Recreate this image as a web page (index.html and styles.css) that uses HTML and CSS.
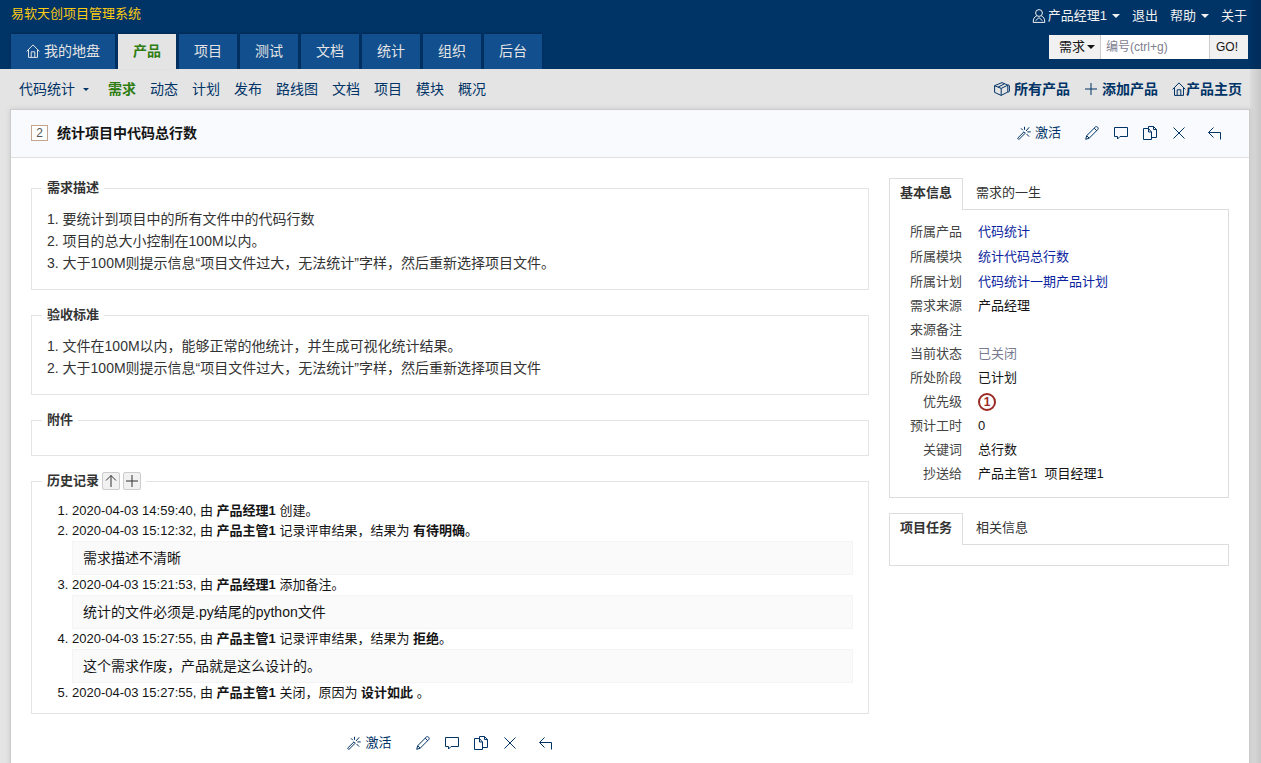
FILE: index.html
```html
<!DOCTYPE html>
<html lang="zh-CN">
<head>
  <meta charset="UTF-8" />
  <meta name="viewport" content="width=device-width, initial-scale=1.0" />
  <title>统计项目中代码总行数</title>
  <link rel="stylesheet" href="styles.css">
</head>
<body>
  <svg class="sprite" aria-hidden="true">
    <symbol id="i-home" viewBox="0 0 14 14"><path d="M.6 7.4 7 .9l6.4 6.5M2.5 6v7.4h9V6M5.2 13.4V7.8h3.6v5.6"/></symbol>
    <symbol id="i-user" viewBox="0 0 14 14"><circle cx="7" cy="4" r="3.400"/><path d="M4.800 6.800C2.300 8 1.200 9.600 1.200 13.400h11.600c0-3.800-1.100-5.400-3.600-6.600M3.500 11.800 7 8.600l3.500 3.200"/></symbol>
    <symbol id="i-cube" viewBox="0 0 16 14"><path d="M.6 3.700 8 .6l5.800 2.600-6.600 3.200zM.6 3.700v6.700l6.600 3V6.400M7.200 13.400l6.600-3.400V3.200M4 5.200l6.400-3.400M13.800 2.600l1.600 1v5.800l-1.600 1"/></symbol>
    <symbol id="i-plus" viewBox="0 0 14 14"><path d="M7 1v12M1 7h12"/></symbol>
    <symbol id="i-up" viewBox="0 0 14 14"><path d="M7 13V1.500M2 6.500l5-5 5 5"/></symbol>
    <symbol id="i-wand" viewBox="0 0 14 14"><path d="M.6 12.200 7 5.800l1.300 1.300-6.400 6.400zM7.500.8v3M4 2.300l1.800 1.900M9 5l3.200-3.700M10.300 5.900h3.400M9.600 8l2.500 2.600"/></symbol>
    <symbol id="i-pencil" viewBox="0 0 14 14"><path d="M.7 13.300l1-3.600L10.400 1c1.400-1.200 3.600.9 2.500 2.400L4.200 12.200zM9.200 2.200l2.600 2.600M1.700 9.700l2.500 2.500"/></symbol>
    <symbol id="i-comment" viewBox="0 0 14 14"><path d="M.5 1.500h13v9H6L3.500 13v-2.500h-3z"/></symbol>
    <symbol id="i-copy" viewBox="0 0 14 14"><path d="M.5 2.500h5l3 3.500v7.500h-8zM5.500 2.500V6h3M5.500 2.500v-2h5l3 3v8h-5M10.500.5v3h3"/></symbol>
    <symbol id="i-close" viewBox="0 0 14 14"><path d="M1.500 1.500l11 11M12.500 1.500l-11 11"/></symbol>
    <symbol id="i-back" viewBox="0 0 14 14"><path d="M5.500 1.500l-5 5 5 5M.5 6.500h12v7"/></symbol>
  </svg>

  <header class="header">
    <div class="topbar">
      <h1 class="company">易软天创项目管理系统</h1>
      <nav class="topnav">
        <a href="#"><svg class="icon"><use href="#i-user"/></svg> 产品经理1<span class="caret"></span></a>
        <a href="#">退出</a>
        <a href="#">帮助<span class="caret"></span></a>
        <a href="#">关于</a>
      </nav>
    </div>
    <div class="mainbar">
      <nav class="mainmenu">
        <a href="#"><svg class="icon"><use href="#i-home"/></svg>我的地盘</a>
        <a href="#" class="active">产品</a>
        <a href="#">项目</a>
        <a href="#">测试</a>
        <a href="#">文档</a>
        <a href="#">统计</a>
        <a href="#">组织</a>
        <a href="#">后台</a>
      </nav>
      <form class="search">
        <label class="search-type">
          <select aria-label="类型"><option>需求</option></select>
          <span class="caret"></span>
        </label>
        <input type="text" placeholder="编号(ctrl+g)" aria-label="编号">
        <button type="button">GO!</button>
      </form>
    </div>
  </header>

  <div class="modulemenu">
    <nav class="modules">
      <a href="#" class="product">代码统计<span class="caret small"></span></a>
      <a href="#" class="active">需求</a>
      <a href="#">动态</a>
      <a href="#">计划</a>
      <a href="#">发布</a>
      <a href="#">路线图</a>
      <a href="#">文档</a>
      <a href="#">项目</a>
      <a href="#">模块</a>
      <a href="#">概况</a>
    </nav>
    <nav class="shortcuts">
      <a href="#"><svg class="icon wide"><use href="#i-cube"/></svg>所有产品</a>
      <a href="#"><svg class="icon"><use href="#i-plus"/></svg>添加产品</a>
      <a href="#" class="tight"><svg class="icon"><use href="#i-home"/></svg>产品主页</a>
    </nav>
  </div>

  <main class="panel">
    <div class="titlebar">
      <h2><span class="story-id">2</span>统计项目中代码总行数</h2>
      <div class="actions">
        <a href="#" class="activate"><svg class="icon"><use href="#i-wand"/></svg>激活</a>
        <a href="#" aria-label="编辑"><svg class="icon"><use href="#i-pencil"/></svg></a>
        <a href="#" aria-label="备注"><svg class="icon"><use href="#i-comment"/></svg></a>
        <a href="#" aria-label="复制"><svg class="icon"><use href="#i-copy"/></svg></a>
        <a href="#" aria-label="删除"><svg class="icon"><use href="#i-close"/></svg></a>
        <a href="#" class="back" aria-label="返回"><svg class="icon"><use href="#i-back"/></svg></a>
      </div>
    </div>

    <div class="row">
      <div class="col-main">
        <fieldset>
          <legend>需求描述</legend>
          <div class="article">
            <p>1. 要统计到项目中的所有文件中的代码行数</p>
            <p>2. 项目的总大小控制在100M以内。</p>
            <p>3. 大于100M则提示信息“项目文件过大，无法统计”字样，然后重新选择项目文件。</p>
          </div>
        </fieldset>
        <fieldset>
          <legend>验收标准</legend>
          <div class="article">
            <p>1. 文件在100M以内，能够正常的他统计，并生成可视化统计结果。</p>
            <p>2. 大于100M则提示信息“项目文件过大，无法统计”字样，然后重新选择项目文件</p>
          </div>
        </fieldset>
        <fieldset>
          <legend>附件</legend>
        </fieldset>
        <fieldset class="history">
          <legend>历史记录
            <button type="button" aria-label="倒序"><svg class="icon"><use href="#i-up"/></svg></button>
            <button type="button" aria-label="展开"><svg class="icon"><use href="#i-plus"/></svg></button>
          </legend>
          <ol>
            <li>2020-04-03 14:59:40, 由 <strong>产品经理1</strong> 创建。</li>
            <li>2020-04-03 15:12:32, 由 <strong>产品主管1</strong> 记录评审结果，结果为 <strong>有待明确</strong>。
              <div class="comment">需求描述不清晰</div>
            </li>
            <li>2020-04-03 15:21:53, 由 <strong>产品经理1</strong> 添加备注。
              <div class="comment">统计的文件必须是.py结尾的python文件</div>
            </li>
            <li>2020-04-03 15:27:55, 由 <strong>产品主管1</strong> 记录评审结果，结果为 <strong>拒绝</strong>。
              <div class="comment">这个需求作废，产品就是这么设计的。</div>
            </li>
            <li>2020-04-03 15:27:55, 由 <strong>产品主管1</strong> 关闭，原因为 <strong>设计如此</strong> 。</li>
          </ol>
        </fieldset>
        <div class="actions bottom">
          <a href="#" class="activate"><svg class="icon"><use href="#i-wand"/></svg>激活</a>
          <a href="#" aria-label="编辑"><svg class="icon"><use href="#i-pencil"/></svg></a>
          <a href="#" aria-label="备注"><svg class="icon"><use href="#i-comment"/></svg></a>
          <a href="#" aria-label="复制"><svg class="icon"><use href="#i-copy"/></svg></a>
          <a href="#" aria-label="删除"><svg class="icon"><use href="#i-close"/></svg></a>
          <a href="#" class="back" aria-label="返回"><svg class="icon"><use href="#i-back"/></svg></a>
        </div>
      </div>

      <div class="col-side">
        <section class="tabs">
          <div class="tab-heads">
            <a href="#" class="active">基本信息</a>
            <a href="#">需求的一生</a>
          </div>
          <div class="tab-content">
            <table>
              <tr class="linked"><th>所属产品</th><td><a href="#">代码统计</a></td></tr>
              <tr class="linked"><th>所属模块</th><td><a href="#">统计代码总行数</a></td></tr>
              <tr class="linked"><th>所属计划</th><td><a href="#">代码统计一期产品计划</a></td></tr>
              <tr><th>需求来源</th><td>产品经理</td></tr>
              <tr><th>来源备注</th><td></td></tr>
              <tr><th>当前状态</th><td class="closed">已关闭</td></tr>
              <tr><th>所处阶段</th><td>已计划</td></tr>
              <tr><th>优先级</th><td><span class="pri">1</span></td></tr>
              <tr><th>预计工时</th><td>0</td></tr>
              <tr><th>关键词</th><td>总行数</td></tr>
              <tr><th>抄送给</th><td>产品主管1 &nbsp;项目经理1</td></tr>
            </table>
          </div>
        </section>
        <section class="tabs">
          <div class="tab-heads">
            <a href="#" class="active">项目任务</a>
            <a href="#">相关信息</a>
          </div>
          <div class="tab-content empty"></div>
        </section>
      </div>
    </div>
  </main>
  <div class="edge"></div>
</body>
</html>
```

FILE: styles.css
```css
* {
  box-sizing: border-box;
}
body {
  margin: 0;
  min-height: 100vh;
  display: flex;
  flex-direction: column;
  font-family: "Liberation Sans", "Noto Sans CJK SC", sans-serif;
  font-size: 13px;
  line-height: 20px;
  color: #141414;
  background: #e4e4e4;
}
a {
  color: #036;
  text-decoration: none;
}
h1, h2, p {
  margin: 0;
}
input, button, select {
  font: inherit;
  color: inherit;
}
.sprite {
  display: none;
}
.icon {
  width: 14px;
  height: 14px;
  flex: none;
  fill: none;
  stroke: currentColor;
  stroke-width: 1;
}
.icon.wide {
  width: 16px;
}
.caret {
  display: inline-block;
  border: 4px solid transparent;
  border-top-color: currentColor;
  border-bottom: 0;
}
.caret.small {
  border-width: 3px;
  border-bottom: 0;
}

/* header */
.header {
  padding: 4px 13px 0 11px;
  background: #036;
  color: #fff;
}
.topbar, .mainbar {
  display: flex;
  justify-content: space-between;
}
.topbar {
  height: 30px;
}
.company {
  font-size: 13px;
  font-weight: normal;
  color: #fc1;
}
.topnav {
  display: flex;
  gap: 12px;
  padding: 2px 1px 0 0;
}
.topnav a {
  display: flex;
  align-items: center;
  height: 20px;
  color: #f1f1f1;
}
.topnav .icon {
  margin-right: 2px;
}
.topnav .caret {
  margin-left: 5px;
}
.mainmenu {
  display: flex;
  gap: 3px;
}
.mainmenu a {
  display: flex;
  align-items: center;
  gap: 4px;
  height: 35px;
  padding: 0 15px 2px;
  font-size: 14px;
  color: #e4e4e4;
  background: #114f8e;
  box-shadow: 0 -1px 2px rgba(0,0,0,0.2);
}
.mainmenu .active {
  font-weight: bold;
  color: #2f7d12;
  background: #e4e4e4;
}
.search {
  display: flex;
  height: 24px;
  margin-top: 1px;
  color: #141414;
}
.search-type {
  position: relative;
  width: 52px;
  border-right: 1px solid #ccc;
  background: #f1f1f1;
}
.search-type select {
  appearance: none;
  width: 100%;
  height: 24px;
  padding: 0 10px;
  border: 0;
  background: transparent;
}
.search-type .caret {
  position: absolute;
  right: 5px;
  top: 10px;
}
.search input {
  width: 108px;
  padding: 0 5px;
  border: 0;
  font-size: 12px;
  background: #fff;
}
.search input::placeholder {
  color: #808090;
}
.search button {
  width: 39px;
  padding: 0 4px 0 0;
  border: 0;
  border-left: 1px solid #ccc;
  font-size: 12px;
  background: #f1f1f1;
}

/* module menu */
.modulemenu {
  display: flex;
  justify-content: space-between;
  align-items: center;
  height: 40px;
  padding: 0 19px;
  font-size: 14px;
}
.modules, .shortcuts {
  display: flex;
  gap: 14px;
}
.modules a, .shortcuts a {
  display: flex;
  align-items: center;
}
.modules .product {
  margin-right: 5px;
}
.modules .caret {
  margin-left: 8px;
}
.modules .active {
  font-weight: bold;
  color: #2f7d12;
}
.shortcuts a {
  gap: 4px;
  font-weight: bold;
}
.shortcuts .tight {
  gap: 0;
}

/* content panel */
.panel {
  flex: 1;
  margin: 0 11px 0 10px;
  border: 1px solid #ccc;
  border-bottom: 0;
  background: #fff;
  box-shadow: 0 0 5px rgba(0,0,0,0.12);
}
.titlebar {
  display: flex;
  justify-content: space-between;
  align-items: center;
  height: 48px;
  padding: 0 27px 2px 20px;
  border-bottom: 1px solid #e0e0e0;
  background: #f8fafe;
}
.titlebar h2 {
  display: flex;
  align-items: center;
  gap: 9px;
  font-size: 14px;
}
.story-id {
  width: 17px;
  height: 16px;
  border: 1px solid #c4a48c;
  font-size: 12px;
  font-weight: normal;
  line-height: 15px;
  text-align: center;
  color: #555;
  background: #fff;
}
.actions {
  display: flex;
  align-items: center;
  gap: 15px;
}
.actions a {
  display: flex;
  align-items: center;
}
.actions .activate {
  gap: 4px;
  margin-right: 9px;
}
.actions .back {
  margin-left: 7px;
}
.actions.bottom {
  justify-content: center;
  margin-top: 19px;
}
.row {
  display: flex;
  gap: 20px;
  padding: 20px;
}
.col-main {
  flex: 1;
  min-width: 0;
}
.col-side {
  width: 340px;
}

fieldset {
  min-width: 0;
  margin: 0 0 15px;
  padding: 10px 15px 15px;
  border: 1px solid #e4e4e4;
}
legend {
  margin-left: -5px;
  padding: 0 5px;
  font-weight: bold;
  color: #333;
}
.article {
  font-size: 14px;
  line-height: 22px;
  color: #333;
}
.history {
  margin-bottom: 0;
  padding-bottom: 10px;
}
.history legend {
  display: flex;
  align-items: center;
  gap: 3px;
}
.history button {
  display: flex;
  align-items: center;
  justify-content: center;
  width: 18px;
  height: 18px;
  padding: 0;
  border: 1px solid #ccc;
  border-radius: 2px;
  color: #333;
  background: #f1f1f1;
}
.history ol {
  margin: 0;
  padding-left: 25px;
}
.comment {
  padding: 6px 10px;
  border: 1px solid #f4f4f4;
  font-size: 14px;
  background: #fafafa;
}

/* side tabs */
.tabs {
  margin-bottom: 15px;
}
.tab-heads {
  display: flex;
  gap: 2px;
}
.tab-heads a {
  height: 31px;
  padding: 4px 10px;
  border: 1px solid transparent;
  border-bottom: 0;
  color: #333;
}
.tab-heads .active {
  height: 32px;
  margin-bottom: -1px;
  border-color: #ddd;
  font-weight: bold;
  background: #fff;
  z-index: 1;
}
.tab-content {
  padding: 9px 10px 11px;
  border: 1px solid #ddd;
}
.tab-content.empty {
  height: 22px;
  padding: 0;
}
table {
  border-collapse: collapse;
}
tr {
  height: 24px;
}
.linked {
  height: 25px;
}
th, td {
  padding: 0 8px;
  text-align: left;
}
th {
  width: 70px;
  font-weight: normal;
  text-align: right;
  color: #444;
}
td a {
  color: #0c1fa0;
}
.closed {
  color: #777a90;
}
.pri {
  display: block;
  width: 18px;
  height: 18px;
  border: 2px solid #9c2a25;
  border-radius: 50%;
  font-size: 12px;
  font-weight: bold;
  line-height: 14px;
  text-align: center;
  color: #9c2a25;
}

/* shade along the right window edge */
.edge {
  position: fixed;
  top: 0;
  right: 0;
  bottom: 0;
  width: 11px;
  background: linear-gradient(to right, rgba(0,0,0,0.03), rgba(0,0,0,0.12));
}
```
